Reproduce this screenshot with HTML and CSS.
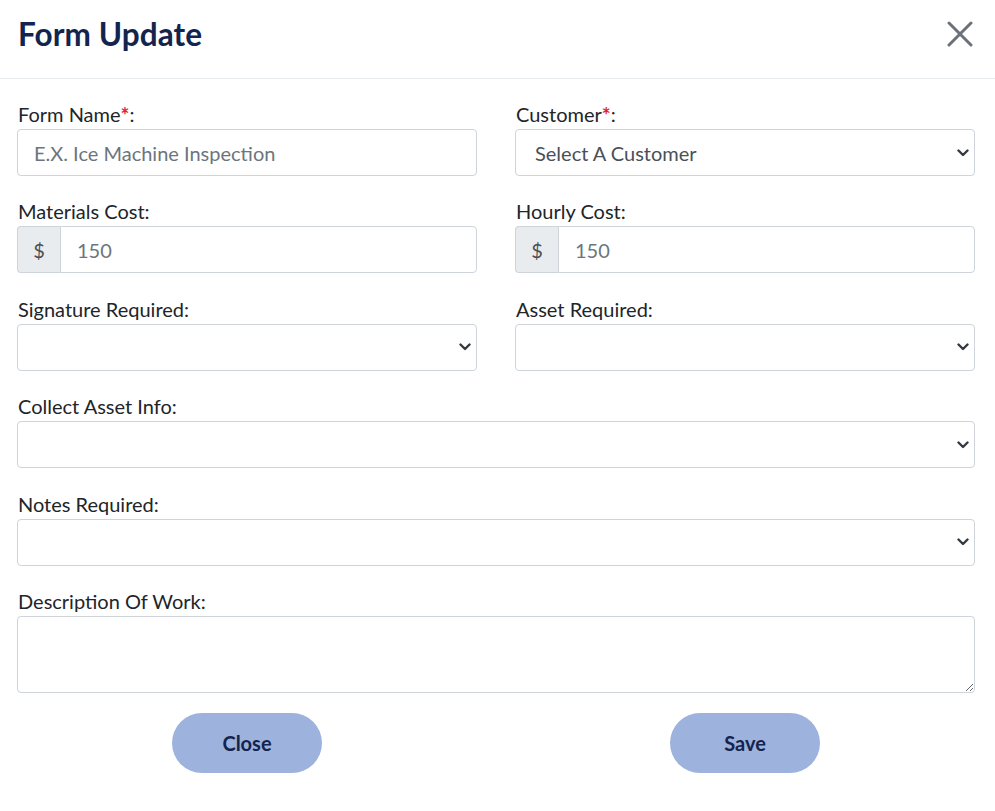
FILE: index.html
```html
<!DOCTYPE html>
<html>
<head>
<meta charset="utf-8">
<link rel="stylesheet" href="styles.css">
</head>
<body>
<div class="modal">
  <div class="modal-header">
    <h1 class="title">Form Update</h1>
    <button class="close" aria-label="Close">
      <svg width="26" height="26" viewBox="0 0 26 26"><path d="M2 2 L24 24 M24 2 L2 24" stroke="#6c7178" stroke-width="3" stroke-linecap="round"/></svg>
    </button>
  </div>
  <div class="modal-body">
    <div class="row">
      <div class="field">
        <label class="label">Form Name<span class="req">*</span>:</label>
        <input class="control" type="text" placeholder="E.X. Ice Machine Inspection">
      </div>
      <div class="field">
        <label class="label">Customer<span class="req">*</span>:</label>
        <select class="control select"><option>Select A Customer</option></select>
      </div>
    </div>
    <div class="row">
      <div class="field">
        <label class="label">Materials Cost:</label>
        <div class="group"><span class="addon">$</span><input class="control grouped" type="text" placeholder="150"></div>
      </div>
      <div class="field">
        <label class="label">Hourly Cost:</label>
        <div class="group"><span class="addon">$</span><input class="control grouped" type="text" placeholder="150"></div>
      </div>
    </div>
    <div class="row">
      <div class="field">
        <label class="label">Signature Required:</label>
        <select class="control select"><option></option></select>
      </div>
      <div class="field">
        <label class="label">Asset Required:</label>
        <select class="control select"><option></option></select>
      </div>
    </div>
    <div class="field">
      <label class="label">Collect Asset Info:</label>
      <select class="control select"><option></option></select>
    </div>
    <div class="field">
      <label class="label">Notes Required:</label>
      <select class="control select"><option></option></select>
    </div>
    <div class="field">
      <label class="label">Description Of Work:</label>
      <textarea class="control textarea"></textarea>
    </div>
    <div class="actions">
      <div class="action-cell"><button class="btn">Close</button></div>
      <div class="action-cell"><button class="btn">Save</button></div>
    </div>
  </div>
</div>
</body>
</html>
```
FILE: styles.css
```css
* { box-sizing: border-box; }
html, body { margin: 0; padding: 0; background: #fff; }
body { font-family: Lato, "Noto Sans", sans-serif; color: #212529; }
.modal { width: 995px; }
.modal-header {
  height: 79px;
  display: flex;
  align-items: center;
  justify-content: space-between;
  padding: 0 22px 0 18px;
  border-bottom: 1px solid #e9ecef;
}
.title {
  margin: 0;
  font-size: 31.5px;
  font-weight: 700;
  color: #13244f;
  letter-spacing: 0.1px;
  padding-bottom: 10px;
}
.close {
  border: 0;
  background: none;
  padding: 0;
  width: 26px;
  height: 26px;
  margin-bottom: 10px;
}
.close svg { display: block; }
.modal-body { padding: 23px 20px 0 17px; }
.row { display: grid; grid-template-columns: 1fr 1fr; column-gap: 38px; }
.field { display: flex; flex-direction: column; margin-bottom: 23.4px; }
.label { font-size: 20px; line-height: 24px; margin-bottom: 3px; padding-left: 1px; color: #212529; }
.req { color: #e8202f; font-weight: 700; font-size: 21px; line-height: 0; position: relative; top: 1px; }
.control {
  height: 47px;
  border: 1px solid #ced4da;
  border-radius: 4px;
  font-family: Lato, "Noto Sans", sans-serif;
  font-size: 20px;
  color: #495057;
  padding: 0 16px;
  background: #fff;
  width: 100%;
}
.control::placeholder { color: #6c757d; }
.select {
  appearance: none;
  -webkit-appearance: none;
  padding-left: 19px;
  color: #495057;
  background-image: url("data:image/svg+xml,%3Csvg xmlns='http://www.w3.org/2000/svg' width='12' height='8' viewBox='0 0 12 8'%3E%3Cpath d='M1.5 1.5 L6 6 L10.5 1.5' fill='none' stroke='%23343a40' stroke-width='2.4' stroke-linecap='round' stroke-linejoin='round'/%3E%3C/svg%3E");
  background-repeat: no-repeat;
  background-position: right 5px center;
  background-size: 12px 8px;
}
.group { display: flex; }
.addon {
  width: 43px;
  height: 47px;
  flex: none;
  display: flex;
  align-items: center;
  justify-content: center;
  background: #e9ecef;
  border: 1px solid #ced4da;
  border-right: 0;
  border-radius: 4px 0 0 4px;
  font-size: 20px;
  color: #495057;
}
.grouped { border-radius: 0 4px 4px 0; }
.textarea { height: 77px; resize: vertical; padding-top: 8px; }
.actions { display: grid; grid-template-columns: 1fr 1fr; column-gap: 38px; margin-top: -3px; }
.action-cell { display: flex; justify-content: center; }
.btn {
  width: 150px;
  height: 60px;
  border: 0;
  border-radius: 30px;
  background: #9db2dc;
  color: #13244f;
  font-family: Lato, "Noto Sans", sans-serif;
  font-size: 20px;
  font-weight: 700;
}
```
